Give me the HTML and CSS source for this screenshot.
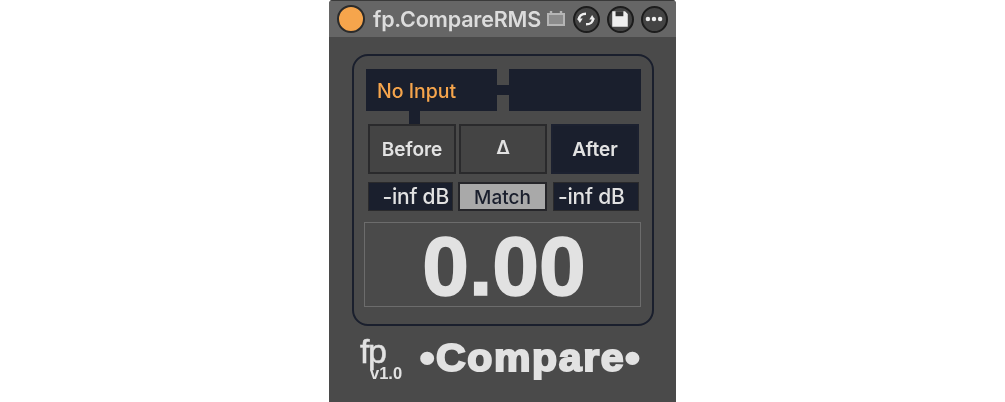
FILE: index.html
```html
<!DOCTYPE html>
<html lang="en">
<head>
  <meta charset="UTF-8" />
  <title>fp.CompareRMS</title>
  <link rel="stylesheet" href="styles.css">
</head>
<body>
  <div class="device">
    <header class="titlebar">
      <span class="power"></span>
      <span class="title">fp.CompareRMS</span>
      <svg class="midi-icon" width="20" height="18" viewBox="0 0 20 18">
        <path d="M5 1v3M15 1v3" stroke="#b5b5b5" stroke-width="2.4" fill="none"/>
        <rect x="2" y="4" width="16" height="11" fill="#8c8c8c" stroke="#b5b5b5" stroke-width="2"/>
      </svg>
      <div class="title-buttons">
        <span class="round-btn">
          <svg width="20" height="20" viewBox="0 0 18 18" fill="none" stroke="#eee" stroke-width="2.2">
            <path d="M2.500 10C2.500 6.500 5 4.200 9 4.200"/>
            <path d="M15.500 8C15.500 11.500 13 13.800 9 13.800"/>
            <path d="M1 8.500h5L3.500 12.500z" fill="#eee" stroke="none"/>
            <path d="M17 9.500h-5L14.500 5.500z" fill="#eee" stroke="none"/>
          </svg>
        </span>
        <span class="round-btn">
          <svg width="20" height="20" viewBox="0 0 18 18">
            <path d="M2 2h11.500L16 4.500V16H2z" fill="#eee"/>
            <rect x="5" y="2" width="7" height="4.500" fill="#333"/>
          </svg>
        </span>
        <span class="round-btn">
          <svg width="20" height="20" viewBox="0 0 18 18" fill="#eee">
            <circle cx="3.500" cy="9" r="2"/>
            <circle cx="9" cy="9" r="2"/>
            <circle cx="14.500" cy="9" r="2"/>
          </svg>
        </span>
      </div>
    </header>

    <main class="panel">
      <div class="status-row">
        <div class="status status-left">No Input</div>
        <div class="status-link"></div>
        <div class="status status-right"></div>
      </div>
      <div class="status-tab"></div>

      <div class="mode-row">
        <div class="mode">Before</div>
        <div class="mode mode-delta">Δ</div>
        <div class="mode mode-on">After</div>
      </div>

      <div class="level-row">
        <div class="level level-left">-inf dB</div>
        <div class="match">Match</div>
        <div class="level level-right">-inf dB</div>
      </div>

      <div class="readout">0.00</div>
    </main>

    <footer class="brand">
      <div class="logo">
        <span class="logo-fp">fp</span>
        <span class="logo-version">v1.0</span>
      </div>
      <div class="brand-name">•Compare•</div>
    </footer>
  </div>
</body>
</html>
```

FILE: styles.css
```css
:root {
  --body: #4a4a4a;
  --bar: #666666;
  --navy: #1a1f2d;
  --light: #e2e2e2;
  --orange: #f6a54c;
}

body {
  margin: 0;
  background: #fff;
  font-family: 'Liberation Sans', Arial, sans-serif;
}

.device {
  width: 347px;
  height: 402px;
  margin: 0 auto;
  background: var(--body);
  border-radius: 4px 4px 0 0;
  box-sizing: border-box;
  overflow: hidden;
  filter: blur(0.4px);
}

/* title bar */
.titlebar {
  height: 37px;
  background: var(--bar);
  border-top: 1px solid #3a3a3a;
  box-sizing: border-box;
  display: flex;
  align-items: center;
  padding-left: 8px;
}

.power {
  width: 24px;
  height: 24px;
  background: var(--orange);
  border: 2px solid #2b2b2b;
  border-radius: 50%;
  flex: none;
}

.title {
  margin-left: 8px;
  font-family: 'Inter', sans-serif;
  font-size: 21.5px;
  font-weight: 600;
  letter-spacing: -0.2px;
  color: #dcdcdc;
  white-space: nowrap;
}

.midi-icon {
  margin-left: 5px;
  flex: none;
}

.title-buttons {
  display: flex;
  gap: 7px;
  margin-left: 7px;
}

.round-btn {
  width: 23px;
  height: 23px;
  background: #444;
  border: 2px solid #1c1c1c;
  border-radius: 50%;
  display: flex;
  align-items: center;
  justify-content: center;
  flex: none;
}

/* main panel */
.panel {
  width: 302px;
  height: 272px;
  margin: 17px 0 0 23px;
  border: 2px solid var(--navy);
  border-radius: 16px;
  box-sizing: border-box;
  padding: 13px 10px 0;
}

.status-row {
  display: flex;
  align-items: center;
  height: 42px;
  margin-left: 2px;
  width: 275px;
}

.status {
  background: var(--navy);
  height: 42px;
}

.status-left {
  width: 131px;
  color: var(--orange);
  font-family: 'Inter', sans-serif;
  font-size: 19.5px;
  font-weight: 500;
  line-height: 44px;
  padding-left: 11px;
  box-sizing: border-box;
}

.status-link {
  width: 12px;
  height: 10px;
  background: var(--navy);
}

.status-right {
  width: 132px;
}

.status-tab {
  width: 11px;
  height: 13px;
  margin-left: 45px;
  background: var(--navy);
}

.mode-row {
  display: flex;
  gap: 3px;
  margin-left: 4px;
}

.mode {
  width: 88px;
  height: 50px;
  box-sizing: border-box;
  border: 2px solid #2a2a2c;
  background: #444;
  color: var(--light);
  font-family: 'Inter', sans-serif;
  font-size: 19px;
  font-weight: 600;
  display: flex;
  align-items: center;
  justify-content: center;
}

.mode-delta {
  padding-bottom: 3px;
}

.mode-on {
  background: var(--navy);
  border-color: #1c2130;
  margin-left: 1px;
}

.level-row {
  display: flex;
  margin: 8px 0 0 4px;
  height: 29px;
}

.level {
  background: var(--navy);
  border: 1px solid #2a2a2c;
  box-sizing: border-box;
  color: var(--light);
  font-family: 'Inter', sans-serif;
  font-size: 21px;
  font-weight: 500;
  letter-spacing: -0.2px;
  line-height: 27px;
  white-space: nowrap;
}

.level-left {
  width: 85px;
  text-align: right;
  padding-right: 3px;
}

.level-right {
  width: 86px;
  padding-left: 4px;
}

.match {
  width: 89px;
  margin: 0 6px 0 5px;
  background: #a9a9a9;
  border: 2px solid #26262a;
  box-sizing: border-box;
  color: var(--navy);
  font-family: 'Inter', sans-serif;
  font-size: 19px;
  font-weight: 500;
  line-height: 27px;
  text-align: center;
}

.readout {
  width: 277px;
  height: 85px;
  margin-top: 11px;
  padding-left: 3px;
  border: 1px solid #6c6c6c;
  box-sizing: border-box;
  color: var(--light);
  font-size: 84px;
  font-weight: bold;
  line-height: 86px;
  text-align: center;
  -webkit-text-stroke: 1.5px var(--light);
}

/* footer */
.brand {
  display: flex;
  align-items: flex-start;
  margin: 12px 0 0 31px;
}

.logo {
  display: flex;
  flex-direction: column;
  width: 60px;
  height: 44px;
}

.logo-fp {
  font-size: 34px;
  line-height: 27px;
  letter-spacing: -1.5px;
  color: var(--light);
  -webkit-text-stroke: 0.5px var(--light);
}

.logo-version {
  margin-left: 10px;
  font-size: 16.5px;
  line-height: 16px;
  font-weight: bold;
  color: var(--light);
}

.brand-name {
  font-size: 38px;
  font-weight: bold;
  line-height: 40px;
  letter-spacing: 1.500px;
  color: var(--light);
  white-space: nowrap;
  transform: scaleX(1.08);
  transform-origin: left center;
  -webkit-text-stroke: 2px var(--light);
}
```
